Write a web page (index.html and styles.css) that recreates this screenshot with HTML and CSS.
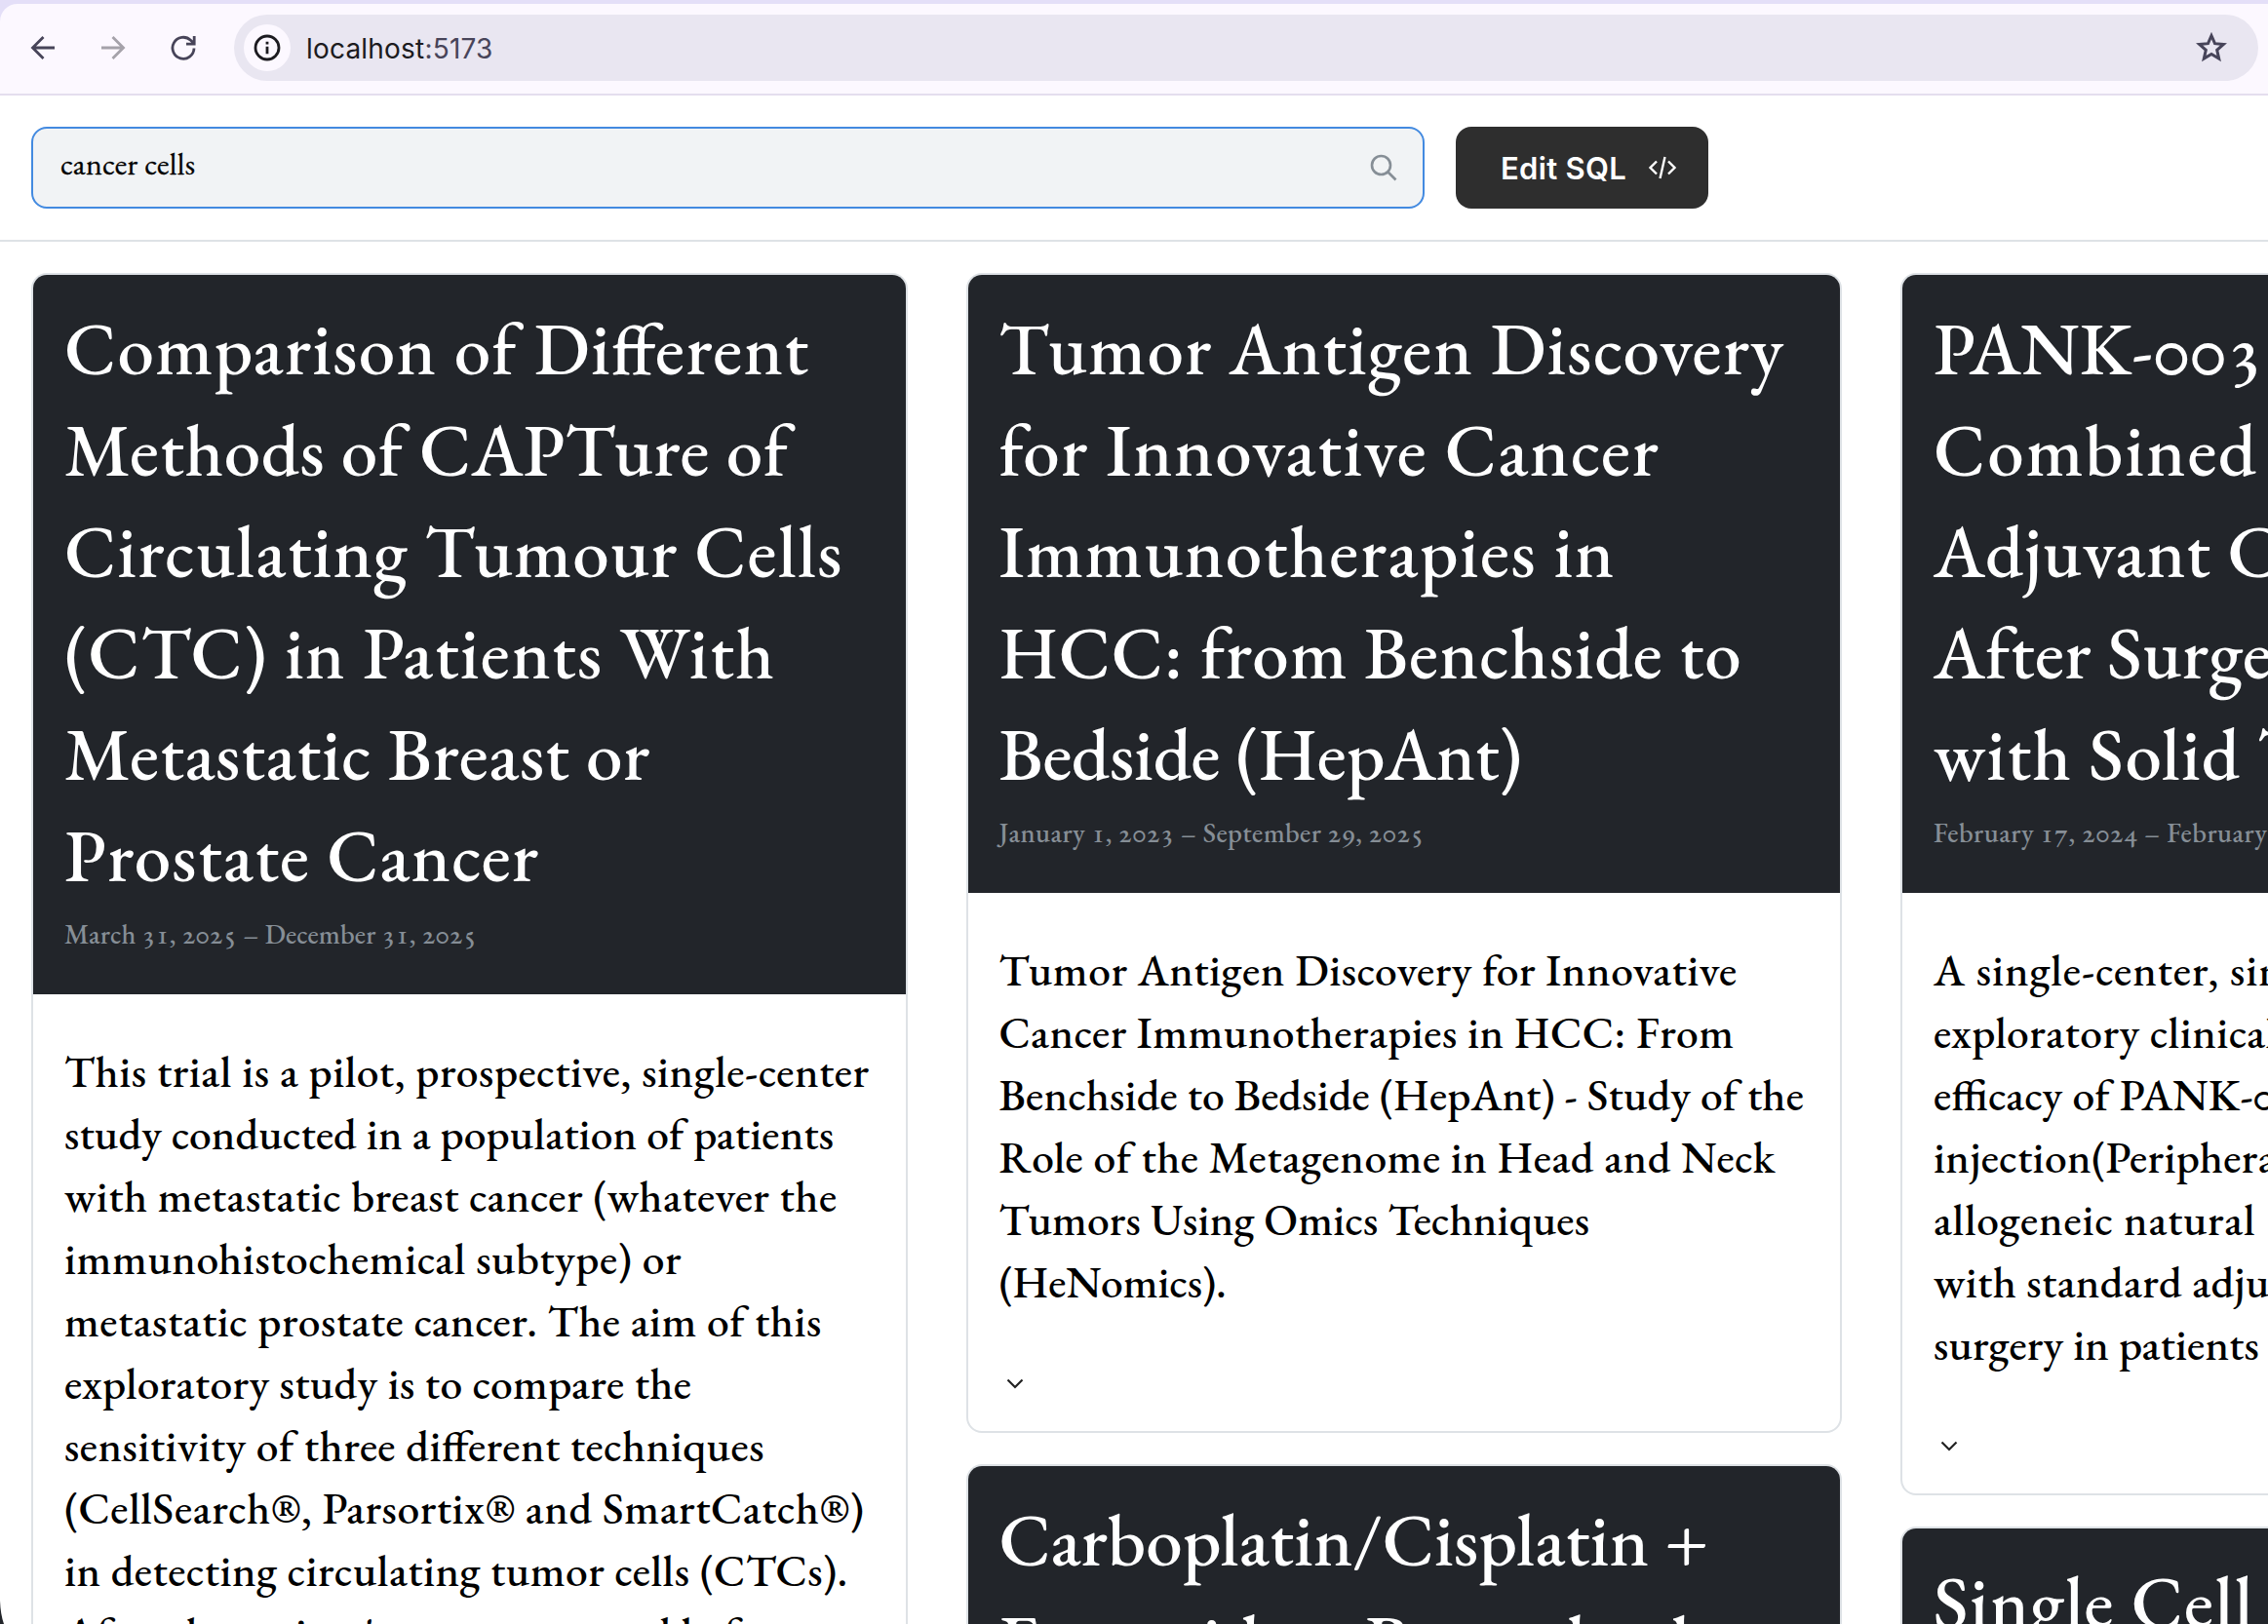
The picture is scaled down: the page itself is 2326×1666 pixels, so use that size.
FILE: index.html
```
<!DOCTYPE html>
<html lang="en">
<head>
<meta charset="utf-8">
<title>Clinical trials</title>
<link rel="stylesheet" href="styles.css">
</head>
<body>
<header class="browser">
  <div class="browser-bar">
    <svg class="nav" viewBox="0 0 28 28"><path d="M26 14H3.500M14.500 3L3.500 14l11 11"/></svg>
    <svg class="nav off" viewBox="0 0 28 28"><path d="M2 14h22.500M13.500 3l11 11-11 11"/></svg>
    <svg class="nav" viewBox="0 0 28 28"><path d="M25 14.500A11 11 0 1 1 21.500 6.200L25 9.500M25.200 2v8.200H17"/></svg>
    <div class="address">
      <span class="info"><svg viewBox="0 0 28 28"><circle cx="14" cy="14" r="12"/><path d="M14 12.800v7.400M14 7.800v2.800"/></svg></span>
      <span class="url">localhost<i>:5173</i></span>
      <svg class="star" viewBox="0 0 32 32"><path d="M16 4.500l3.500 8.200 8.900.8-6.700 5.900 2 8.700-7.700-4.600-7.700 4.600 2-8.700-6.700-5.900 8.900-.8z"/></svg>
    </div>
  </div>
</header>
<div class="toolbar">
  <div class="search"><span>cancer cells</span>
    <svg viewBox="0 0 30 30"><circle cx="12.500" cy="12.500" r="9.500"/><path d="M19.500 19.500l8 8"/></svg>
  </div>
  <button class="edit">Edit SQL
    <svg viewBox="0 0 30 30"><path d="M9 8.500L2.500 15 9 21.500M21 8.500l6.500 6.500-6.500 6.500M17.500 4l-5 22"/></svg>
  </button>
</div>
<main class="columns">
  <section class="column">
    <article class="card">
      <div class="head">
        <h2><span class="ls-13">Comparison of Different</span><span class="ls-6">Methods of CAPTure of</span><span class="ls-11">Circulating Tumour Cells</span><span class="ls-13">(CTC) in Patients With</span><span class="ls-6">Metastatic Breast or</span><span class="ls-11">Prostate Cancer</span></h2>
        <p class="dates"><span class="ls-2">March 31, 2025 – December 31, 2025</span></p>
      </div>
      <p class="summary"><span class="ls-6">This trial is a pilot, prospective, single-center</span><span class="ls-2">study conducted in a population of patients</span><span class="ls-5">with metastatic breast cancer (whatever the</span><span class="ls-6">immunohistochemical subtype) or</span><span class="ls-5">metastatic prostate cancer. The aim of this</span><span class="ls-4">exploratory study is to compare the</span><span class="ls-5">sensitivity of three different techniques</span><span class="ls-6">(CellSearch®, Parsortix® and SmartCatch®)</span><span class="ls-5">in detecting circulating tumor cells (CTCs).</span><span class="ls-4">After the patient's agreement, and before</span></p>
    </article>
  </section>
  <section class="column">
    <article class="card">
      <div class="head">
        <h2><span class="ls-12">Tumor Antigen Discovery</span><span class="ls-15">for Innovative Cancer</span><span class="ls-14">Immunotherapies in</span><span class="ls-8">HCC: from Benchside to</span><span class="ls-0">Bedside (HepAnt)</span></h2>
        <p class="dates"><span class="ls-4">January 1, 2023 – September 29, 2025</span></p>
      </div>
      <p class="summary"><span class="ls-6">Tumor Antigen Discovery for Innovative</span><span class="ls-5">Cancer Immunotherapies in HCC: From</span><span class="ls-2">Benchside to Bedside (HepAnt) - Study of the</span><span class="ls-5">Role of the Metagenome in Head and Neck</span><span class="ls-2">Tumors Using Omics Techniques</span><span class="ls-0">(HeNomics).</span></p>
      <svg class="chevron" viewBox="0 0 30 30"><path d="M7.500 11.500L15 19l7.500-7.500"/></svg>
    </article>
    <article class="card">
      <div class="head">
        <h2><span class="ls-1">Carboplatin/Cisplatin +</span><span class="ls-4">Etoposide + Benmelstobart</span></h2>
      </div>
    </article>
  </section>
  <section class="column">
    <article class="card">
      <div class="head">
        <h2><span class="ls-4">PANK-003</span><span class="ls-19">Combined</span><span class="ls-8">Adjuvant Chemotherapy</span><span class="ls-4">After Surgery</span><span class="ls-11">with Solid Tumors</span></h2>
        <p class="dates"><span class="ls-5">February 17, 2024 – February</span></p>
      </div>
      <p class="summary"><span class="ls-10">A single-center, single</span><span class="ls-5">exploratory clinical</span><span class="ls-3">efficacy of PANK-003</span><span class="ls-4">injection(Peripheral</span><span class="ls-8">allogeneic natural</span><span class="ls-4">with standard adjuvant</span><span class="ls-2">surgery in patients</span></p>
      <svg class="chevron" viewBox="0 0 30 30"><path d="M7.500 11.500L15 19l7.500-7.500"/></svg>
    </article>
    <article class="card">
      <div class="head">
        <h2><span class="ls-11">Single Cell</span></h2>
      </div>
    </article>
  </section>
</main>
<svg class="corner" viewBox="0 0 6 24"><path d="M0 0Q.5 14 4 24H0z"/></svg>
</body>
</html>
```

FILE: styles.css
```
* { box-sizing: border-box; }
html, body { margin: 0; height: 100%; overflow: hidden; }
body {
  display: flex;
  flex-direction: column;
  background: #fff;
  color: #000;
  font-family: "EB Garamond", "Liberation Serif", serif;
  font-weight: 500;
  font-variant-numeric: oldstyle-nums;
  font-feature-settings: "liga" 1;
}
h2, p { margin: 0; font-weight: 500; }
svg { flex: none; fill: none; stroke: currentColor; stroke-width: 2.8; }

/* Browser chrome */
.browser { flex: none; height: 98px; padding-top: 4px; background: #e4dff8; }
.browser-bar {
  display: flex;
  align-items: center;
  height: 94px;
  padding: 0 10px 2px 30px;
  border-bottom: 2px solid #e4deee;
  border-top-left-radius: 18px;
  background: #fcf8ff;
  color: #474459;
}
.nav { width: 28px; height: 28px; margin-right: 44px; }
.nav.off { color: #a5a2aa; }
.address {
  display: flex;
  flex: 1;
  align-items: center;
  height: 68px;
  margin-left: -6px;
  padding: 0 32px 0 10px;
  border-radius: 34px;
  background: #e9e6f1;
  font: 400 28px Inter, sans-serif;
}
.info {
  display: flex;
  align-items: center;
  justify-content: center;
  width: 48px;
  height: 48px;
  margin-right: 16px;
  border-radius: 50%;
  background: #fcf8ff;
  color: #1c1b20;
}
.info svg { width: 28px; height: 28px; }
.url { flex: 1; padding-top: 2px; color: #1c1b20; letter-spacing: .2px; }
.url i { color: #474459; font-style: normal; }
.star { width: 32px; height: 32px; margin-top: -2px; color: #474459; stroke-width: 3; }

/* Search row */
.toolbar {
  display: flex;
  flex: none;
  gap: 32px;
  height: 150px;
  padding: 32px;
  border-bottom: 2px solid #dee2e6;
}
.search {
  display: flex;
  align-items: center;
  justify-content: space-between;
  width: 1429px;
  padding: 0 25px 0 28px;
  border: 2px solid #438ae0;
  border-radius: 16px;
  background: #f1f3f5;
  font-size: 32px;
  font-weight: 400;
  letter-spacing: .3px;
  -webkit-text-stroke: .3px #000;
}
.search span { padding-bottom: 9px; }
.search svg { width: 30px; height: 30px; color: #868e96; stroke-width: 2.6; }
.edit {
  display: flex;
  align-items: center;
  justify-content: space-between;
  width: 259px;
  padding: 0 32px 0 46px;
  border: 0;
  border-radius: 16px;
  background: #2e2e2e;
  color: #fff;
  font: 600 31px Inter, sans-serif;
  letter-spacing: .3px;
}
.edit svg { width: 30px; height: 30px; stroke-width: 2.4; }

/* Result cards */
.columns {
  display: grid;
  grid-template-columns: repeat(3, 898.5px);
  gap: 60px;
  padding: 32px;
}
.column { display: flex; flex-direction: column; gap: 32px; }
.card {
  flex: none;
  overflow: hidden;
  border: 2px solid #dee2e6;
  border-radius: 16px;
}
.card span { display: block; width: max-content; white-space: nowrap; }
.head { padding: 23px 32px 37px; background: #22252a; color: #fff; }
.head h2 { font-size: 75px; line-height: 104px; }
.dates { padding-top: 4px; color: #868e96; font-size: 28px; line-height: 50px; }
.summary { padding: 47px 32px 0; font-size: 45.5px; line-height: 64px; }
.chevron { display: block; width: 30px; height: 30px; margin: 57px 0 34px 33px; color: #222; stroke-width: 2.2; }

/* Tracking steps, in tenths of a pixel */
.ls-0 { letter-spacing: -.1px; }
.ls-1 { letter-spacing: .1px; }
.ls-2 { letter-spacing: .17px; }
.ls-3 { letter-spacing: .3px; }
.ls-4 { letter-spacing: .4px; }
.ls-5 { letter-spacing: .5px; }
.ls-6 { letter-spacing: .58px; }
.ls-8 { letter-spacing: .78px; }
.ls-10 { letter-spacing: 1px; }
.ls-11 { letter-spacing: 1.1px; }
.ls-12 { letter-spacing: 1.2px; }
.ls-13 { letter-spacing: 1.3px; }
.ls-14 { letter-spacing: 1.45px; }
.ls-15 { letter-spacing: 1.55px; }
.ls-19 { letter-spacing: 1.9px; }

.corner { position: absolute; left: 0; bottom: 0; width: 6px; height: 24px; fill: #22252a; stroke: none; }
```
